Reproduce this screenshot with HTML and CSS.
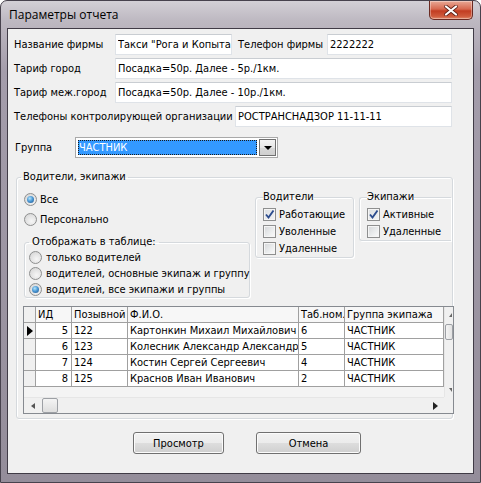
FILE: index.html
```html
<!DOCTYPE html>
<html lang="ru">
<head>
<meta charset="utf-8">
<title>Параметры отчета</title>
<link rel="stylesheet" href="styles.css">
</head>
<body>
<div class="window">
  <div class="titlebar">
    <span class="title">Параметры отчета</span>
    <div class="close">
      <svg width="14" height="11" viewBox="0 0 14 11">
        <path d="M2 1.5 L12 9.5 M12 1.5 L2 9.5" stroke="#5a1d14" stroke-width="3.6" stroke-linecap="round"/>
        <path d="M2 1.5 L12 9.5 M12 1.5 L2 9.5" stroke="#ffffff" stroke-width="2.2" stroke-linecap="round"/>
      </svg>
    </div>
  </div>
  <div class="client">
    <div class="row">
      <span class="lbl w101">Название фирмы</span>
      <input class="tb w117" value="Такси &quot;Рога и Копыта&quot;">
      <span class="lbl lbl2">Телефон фирмы</span>
      <input class="tb w125" value="2222222">
    </div>
    <div class="row">
      <span class="lbl w101">Тариф город</span>
      <input class="tb w337" value="Посадка=50р. Далее - 5р./1км.">
    </div>
    <div class="row">
      <span class="lbl w101">Тариф меж.город</span>
      <input class="tb w337" value="Посадка=50р. Далее - 10р./1км.">
    </div>
    <div class="row">
      <span class="lbl w221">Телефоны контролирующей организации</span>
      <input class="tb w217" value="РОСТРАНСНАДЗОР 11-11-11">
    </div>
    <div class="grouprow">
      <span class="lbl w60">Группа</span>
      <div class="combo">
        <div class="sel">ЧАСТНИК</div>
        <div class="ddbtn"><span class="tri-down"></span></div>
      </div>
    </div>

    <fieldset class="gb outer">
      <legend>Водители, экипажи</legend>
      <div class="dcols">
        <div class="leftcol">
          <div class="opt first"><span class="radio on"></span><span>Все</span></div>
          <div class="opt second"><span class="radio"></span><span>Персонально</span></div>
          <fieldset class="gb show">
            <legend>Отображать в таблице:</legend>
            <div class="opt sm"><span class="radio"></span><span>только водителей</span></div>
            <div class="opt sm"><span class="radio"></span><span>водителей, основные экипаж и группу</span></div>
            <div class="opt sm"><span class="radio on"></span><span>водителей, все экипажи и группы</span></div>
          </fieldset>
        </div>
        <fieldset class="gb drv">
          <legend>Водители</legend>
          <div class="opt ck"><span class="chk on"><svg width="11" height="11" viewBox="0 0 11 11"><path d="M2 5.5 L4.5 8.5 L9.5 1.5" fill="none" stroke="#2c4c8e" stroke-width="1.9"/></svg></span><span>Работающие</span></div>
          <div class="opt ck"><span class="chk"></span><span>Уволенные</span></div>
          <div class="opt ck"><span class="chk"></span><span>Удаленные</span></div>
        </fieldset>
        <fieldset class="gb crw">
          <legend>Экипажи</legend>
          <div class="opt ck"><span class="chk on"><svg width="11" height="11" viewBox="0 0 11 11"><path d="M2 5.5 L4.5 8.5 L9.5 1.5" fill="none" stroke="#2c4c8e" stroke-width="1.9"/></svg></span><span>Активные</span></div>
          <div class="opt ck"><span class="chk"></span><span>Удаленные</span></div>
        </fieldset>
      </div>

      <div class="grid">
        <div class="gridarea">
          <table class="dbg">
            <colgroup>
              <col class="c0"><col class="c1"><col class="c2"><col class="c3"><col class="c4"><col class="c5">
            </colgroup>
            <thead>
              <tr><th class="ind"></th><th>ИД</th><th>Позывной</th><th>Ф.И.О.</th><th>Таб.ном.</th><th>Группа экипажа</th></tr>
            </thead>
            <tbody>
              <tr><td class="ind"><span class="cur"></span></td><td class="num">5</td><td>122</td><td>Картонкин Михаил Михайлович</td><td>6</td><td>ЧАСТНИК</td></tr>
              <tr><td class="ind"></td><td class="num">6</td><td>123</td><td>Колесник Александр Александрович</td><td>5</td><td>ЧАСТНИК</td></tr>
              <tr><td class="ind"></td><td class="num">7</td><td>124</td><td>Костин Сергей Сергеевич</td><td>4</td><td>ЧАСТНИК</td></tr>
              <tr><td class="ind"></td><td class="num">8</td><td>125</td><td>Краснов Иван Иванович</td><td>2</td><td>ЧАСТНИК</td></tr>
            </tbody>
          </table>
        </div>
        <div class="vscroll">
          <div class="sarrow"><span class="tri-up-s"></span></div>
          <div class="vthumb"></div>
          <div class="sfill"></div>
          <div class="sarrow"><span class="tri-down-s"></span></div>
        </div>
        <div class="hscroll">
          <div class="harrow"><span class="tri-left-s"></span></div>
          <div class="hthumb"></div>
          <div class="sfill"></div>
          <div class="harrow"><span class="tri-right-s"></span></div>
        </div>
        <div class="corner"></div>
      </div>
    </fieldset>

    <div class="buttons">
      <div class="btn b1">Просмотр</div>
      <div class="btn b2">Отмена</div>
    </div>
  </div>
</div>
</body>
</html>
```
FILE: styles.css
```css
html, body {
  margin: 0;
  padding: 0;
  background: #ffffff;
}
.window {
  width: 481px;
  height: 483px;
  box-sizing: border-box;
  border: 1px solid #47424d;
  border-radius: 7px 7px 0 0;
  background: linear-gradient(to bottom, #d3d0d6 0px, #bdb8c1 20px, #a49dab 70px, #948d9a 100%);
  padding: 0 6px 8px 6px;
  display: flex;
  flex-direction: column;
  font-family: "DejaVu Sans Condensed", "DejaVu Sans", sans-serif;
  font-size: 11px;
  color: #000;
}
.titlebar {
  height: 27px;
  display: flex;
  align-items: flex-start;
  flex-shrink: 0;
}
.title {
  font-family: "Open Sans", "Liberation Sans", sans-serif;
  font-size: 12px;
  line-height: 16px;
  margin-top: 6px;
  padding-left: 2px;
  color: #000;
}
.close {
  margin-left: auto;
  margin-right: 1px;
  width: 44px;
  height: 19px;
  box-sizing: border-box;
  border: 1px solid #6a2a22;
  border-top: none;
  border-radius: 0 0 5px 5px;
  background: linear-gradient(to bottom, #e9a996 0%, #d7684f 45%, #c23d22 55%, #cf5a3c 85%, #e08a6c 100%);
  box-shadow: inset 0 0 0 1px rgba(255,255,255,0.35);
  display: flex;
  align-items: center;
  justify-content: center;
}
.client {
  flex: 1;
  border: 1px solid #403b46;
  background: #f0f0f0;
  padding-top: 5px;
}
.row {
  display: flex;
  align-items: center;
  height: 21px;
  margin-bottom: 3px;
  padding-left: 6px;
}
.lbl {
  flex-shrink: 0;
  white-space: nowrap;
}
.w101 { width: 101px; }
.w221 { width: 221px; }
.w60 { width: 60px; }
.lbl2 { margin-left: 6px; width: 89px; }
.tb {
  box-sizing: border-box;
  height: 21px;
  margin: 0;
  padding: 0 0 0 2px;
  border: 1px solid #dfe3e8;
  border-top-color: #c9cdd2;
  background: #ffffff;
  font-family: "DejaVu Sans Condensed", "DejaVu Sans", sans-serif;
  font-size: 11px;
  color: #000;
  outline: none;
}
.w117 { width: 117px; }
.w125 { width: 125px; }
.w337 { width: 337px; }
.w217 { width: 217px; }

.grouprow {
  display: flex;
  align-items: center;
  height: 21px;
  margin-top: 10px;
  padding-left: 7px;
}
.combo {
  box-sizing: border-box;
  width: 203px;
  height: 21px;
  border: 1px solid #a9a9a9;
  background: #fff;
  padding: 1px;
  display: flex;
}
.sel {
  flex: 1;
  margin: 1px 2px 1px 1px;
  background: #3399ff;
  color: #fff;
  line-height: 15px;
  outline: 1px dotted #1a1a1a;
  outline-offset: -1px;
  padding-left: 1px;
}
.ddbtn {
  width: 17px;
  box-sizing: border-box;
  border: 1px solid #707070;
  background: linear-gradient(to bottom, #f4f4f4, #e6e6e6 50%, #d8d8d8 51%, #cfcfcf);
  display: flex;
  align-items: center;
  justify-content: center;
}
.tri-down {
  width: 0; height: 0;
  border-left: 4px solid transparent;
  border-right: 4px solid transparent;
  border-top: 4px solid #000;
}

.gb {
  margin: 0;
  border: 1px solid #d5d9dd;
  border-radius: 3px;
  box-shadow: inset 1px 1px 0 #ffffff, 1px 1px 0 #ffffff;
  box-sizing: border-box;
  min-width: 0;
}
.gb legend {
  line-height: 14px;
  padding: 0;
  white-space: nowrap;
}
.outer {
  margin: 12px 0 0 8px;
  width: 437px;
  padding: 0 0 4px 7px;
}
.outer > legend {
  margin-left: -3px;
  padding: 0 2px;
}
.dcols {
  display: flex;
  padding-top: 5px;
  gap: 5px;
  align-items: flex-start;
}
.leftcol {
  width: 226px;
  flex-shrink: 0;
}
.opt {
  display: flex;
  align-items: center;
  height: 16px;
  white-space: nowrap;
}
.opt.first { margin-top: 2px; }
.opt.second { margin-top: 4px; }
.radio {
  width: 13px;
  height: 13px;
  box-sizing: border-box;
  border-radius: 50%;
  border: 1px solid #8e8f8f;
  background: radial-gradient(circle at 60% 65%, #f6f6f6 0, #e2e2e2 55%, #cfcfcf 100%);
  margin-right: 3px;
  flex-shrink: 0;
  display: flex;
  align-items: center;
  justify-content: center;
}
.radio.on::after {
  content: "";
  width: 7px;
  height: 7px;
  border-radius: 50%;
  background: radial-gradient(circle at 40% 35%, #b6e6fb 0, #4d9ad6 45%, #1d4f86 100%);
}
.show {
  margin-top: 8px;
  width: 226px;
  padding: 0 0 0 4px;
}
.show > legend {
  padding: 0 3px;
}
.opt.sm .radio { margin-right: 4px; }
.drv {
  width: 99px;
  margin-top: 1px;
  padding: 2px 0 0 7px;
  flex-shrink: 0;
}
.crw {
  width: 92px;
  margin-top: 1px;
  padding: 2px 0 0 7px;
  border-right: none;
  border-radius: 3px 0 0 3px;
  flex-shrink: 0;
}
.opt.ck { height: 17px; }
.chk {
  width: 13px;
  height: 13px;
  box-sizing: border-box;
  border: 1px solid #8e8f8f;
  background: linear-gradient(135deg, #d4d6d8 0%, #eceeef 60%, #fbfbfb 100%);
  box-shadow: inset 0 0 0 1px #f5f5f5;
  margin-right: 3px;
  flex-shrink: 0;
  display: flex;
  align-items: center;
  justify-content: center;
}
.chk.on { background: linear-gradient(135deg, #dcdfe2 0%, #f2f3f4 100%); }

.grid {
  margin: 8px 0 0 -1px;
  width: 431px;
  box-sizing: border-box;
  border: 1px solid #868a90;
  display: grid;
  grid-template-columns: 420px 9px;
  grid-template-rows: 90px 16px;
  background: #f4f4f4;
}
.gridarea {
  overflow: hidden;
  background: #f4f4f4;
}
.dbg {
  border-collapse: separate;
  border-spacing: 0;
  table-layout: fixed;
  width: 420px;
}
.c0 { width: 12px; }
.c1 { width: 36px; }
.c2 { width: 56px; }
.c3 { width: 171px; }
.c4 { width: 46px; }
.c5 { width: 99px; }
.dbg th, .dbg td {
  padding: 0 2px;
  line-height: 15px;
  border-right: 1px solid #a0a0a0;
  border-bottom: 1px solid #a0a0a0;
  white-space: nowrap;
  overflow: hidden;
  font-weight: normal;
  text-align: left;
  background: #ffffff;
}
.dbg th { background: #f7f7f7; }
.dbg .ind { background: #f0f0f0; padding: 0 0 0 3px; }
.dbg td.num { text-align: right; padding-right: 3px; }
.cur {
  display: block;
  width: 0; height: 0;
  border-top: 5px solid transparent;
  border-bottom: 5px solid transparent;
  border-left: 6px solid #000;
}
.vscroll {
  background: #f0f0f0;
  border-left: 1px solid #e6e6e6;
  display: flex;
  flex-direction: column;
  align-items: stretch;
}
.sarrow {
  height: 15px;
  display: flex;
  align-items: center;
  justify-content: flex-end;
  padding-right: 1px;
}
.sfill { flex: 1; }
.vthumb {
  height: 14px;
  margin: 2px 0 0 0;
  border: 1px solid #9da0a5;
  border-radius: 2px;
  background: linear-gradient(to right, #f4f4f4, #e2e2e2);
}
.tri-up-s {
  width: 0; height: 0;
  border-left: 3px solid transparent;
  border-bottom: 4px solid #666;
}
.tri-down-s {
  width: 0; height: 0;
  border-left: 3px solid transparent;
  border-top: 4px solid #666;
}
.hscroll {
  background: #f0f0f0;
  border-top: 1px solid #e6e6e6;
  display: flex;
  align-items: stretch;
}
.harrow {
  width: 17px;
  display: flex;
  align-items: center;
  justify-content: center;
}
.hthumb {
  width: 14px;
  margin: 0 0 0 1px;
  border: 1px solid #9da0a5;
  border-radius: 2px;
  background: linear-gradient(to bottom, #f4f4f4, #dedede);
}
.tri-left-s {
  width: 0; height: 0;
  border-top: 3px solid transparent;
  border-bottom: 3px solid transparent;
  border-right: 4px solid #555;
}
.tri-right-s {
  width: 0; height: 0;
  border-top: 4px solid transparent;
  border-bottom: 4px solid transparent;
  border-left: 5px solid #222;
}
.corner { background: #f0f0f0; }

.buttons {
  display: flex;
  margin-top: 13px;
  padding-left: 125px;
  gap: 32px;
}
.btn {
  box-sizing: border-box;
  height: 22px;
  border: 1px solid #707070;
  border-radius: 3px;
  background: linear-gradient(to bottom, #f2f2f2 0%, #ebebeb 50%, #dddddd 51%, #cfcfcf 100%);
  box-shadow: inset 0 0 0 1px #fbfbfb;
  display: flex;
  align-items: center;
  justify-content: center;
}
.b1 { width: 91px; }
.b2 { width: 105px; }
```
